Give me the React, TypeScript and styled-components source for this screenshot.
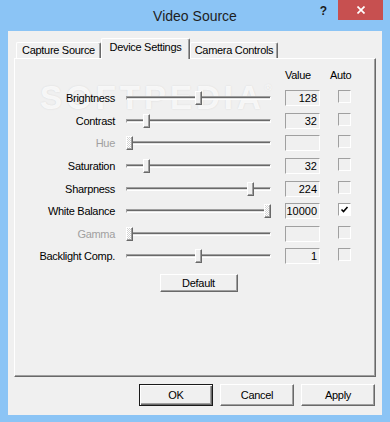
import React from "react";
import styled, { createGlobalStyle, css } from "styled-components";

const GlobalStyle = createGlobalStyle`
  html, body {
    margin: 0;
    padding: 0;
    background: #8bc4f5;
  }
  body {
    font-family: "Liberation Sans", Arial, sans-serif;
  }
`;

const Window = styled.div`
  width: 390px;
  height: 422px;
  background: #8bc4f5;
  display: flex;
  flex-direction: column;
  overflow: hidden;
`;

const TitleBar = styled.div`
  height: 31px;
  flex: none;
  display: grid;
  grid-template-columns: 1fr auto 1fr;
`;

const Title = styled.div`
  grid-column: 2;
  align-self: center;
  font-size: 14px;
  color: #1e1e1e;
`;

const Caption = styled.div`
  grid-column: 3;
  justify-self: end;
  display: flex;
  align-items: flex-start;
`;

const Help = styled.span`
  margin: 5px 11px 0 0;
  font-size: 12px;
  line-height: 12px;
  font-weight: bold;
  color: #1c1c1c;
`;

const Close = styled.div`
  width: 45px;
  height: 20px;
  margin-right: 7px;
  background: #c75050;
  display: flex;
  align-items: center;
  justify-content: center;
`;

const Client = styled.div`
  flex: 1;
  margin: 0 8px 7px;
  padding: 7px 6px 0;
  background: #f0f0f0;
  display: flex;
  flex-direction: column;
  font-size: 11px;
  letter-spacing: -0.3px;
  color: #000;
`;

const Tabs = styled.div`
  height: 20px;
  flex: none;
  display: flex;
  align-items: flex-end;
  padding-left: 2px;
  position: relative;
  z-index: 1;
`;

const raised = css`
  border-top: 1px solid #fff;
  border-left: 1px solid #fff;
  border-right: 1px solid #696969;
  box-shadow: inset -1px 0 0 #a0a0a0;
`;

const Tab = styled.div<{ $active?: boolean; $w: number }>`
  ${raised};
  box-sizing: border-box;
  width: ${(p) => p.$w}px;
  height: ${(p) => (p.$active ? 21 : 16)}px;
  margin-bottom: ${(p) => (p.$active ? -1 : 0)}px;
  border-radius: 2px 2px 0 0;
  background: #f0f0f0;
  display: flex;
  justify-content: center;
  align-items: ${(p) => (p.$active ? "flex-start" : "center")};
  padding-top: ${(p) => (p.$active ? 2 : 0)}px;
  line-height: 13px;
  white-space: nowrap;
`;

const Panel = styled.div`
  position: relative;
  height: 319px;
  flex: none;
  box-sizing: border-box;
  border-top: 1px solid #fff;
  border-left: 1px solid #fff;
  border-right: 1px solid #696969;
  border-bottom: 1px solid #696969;
  box-shadow: inset -1px -1px 0 #a0a0a0;
  padding-top: 7px;
`;

const Watermark = styled.div`
  position: absolute;
  left: 25px;
  top: 20px;
  font-size: 33px;
  font-weight: bold;
  letter-spacing: 4px;
  color: rgba(255, 255, 255, 0.8);
  text-shadow: 0 0 2px rgba(0, 0, 0, 0.1);
  pointer-events: none;

  sup {
    font-size: 9px;
    letter-spacing: 0;
    vertical-align: 18px;
  }
`;

const Settings = styled.div`
  position: relative;
  display: grid;
  grid-template-columns: 111px 159px 53px 13px;
  grid-template-rows: 21px repeat(8, 22.6px) auto;
`;

const Head = styled.div<{ $shift?: number }>`
  align-self: start;
  line-height: 18px;
  margin-left: ${(p) => p.$shift ?? 0}px;
  white-space: nowrap;
`;

const Label = styled.div<{ $disabled?: boolean }>`
  align-self: center;
  text-align: right;
  padding-right: 11px;
  white-space: nowrap;
  color: ${(p) => (p.$disabled ? "#a0a0a0" : "#000")};
`;

const Slider = styled.div`
  position: relative;
  width: 145px;
  display: flex;
  align-items: center;
`;

const Track = styled.div`
  width: 100%;
  height: 4px;
  box-sizing: border-box;
  border-top: 1px solid #a0a0a0;
  border-left: 1px solid #a0a0a0;
  border-bottom: 1px solid #fff;
  border-right: 1px solid #fff;
  background: linear-gradient(#696969 0 1px, #e3e3e3 1px);
`;

const Thumb = styled.div<{ $hatched?: boolean }>`
  position: absolute;
  top: 50%;
  margin-top: -7px;
  width: 7px;
  height: 14px;
  box-sizing: border-box;
  border-top: 1px solid #fff;
  border-left: 1px solid #fff;
  border-right: 1px solid #696969;
  border-bottom: 1px solid #696969;
  box-shadow: inset -1px -1px 0 #a0a0a0;
  background: ${(p) =>
    p.$hatched
      ? "repeating-conic-gradient(#ffffff 0 25%, #d4d4d4 0 50%) 0 0 / 2px 2px"
      : "#f0f0f0"};
`;

const sunken = css`
  box-sizing: border-box;
  border: 1px solid;
  border-color: #a0a0a0 #fff #fff #a0a0a0;
`;

const ValueBox = styled.div`
  ${sunken};
  align-self: center;
  width: 35px;
  height: 16px;
  padding-right: 2px;
  background: #f0f0f0;
  text-align: right;
  line-height: 14px;
  letter-spacing: 0;
`;

const Check = styled.div<{ $checked?: boolean }>`
  ${sunken};
  align-self: center;
  margin-top: -3px;
  width: 13px;
  height: 13px;
  background: ${(p) => (p.$checked ? "#fff" : "#f0f0f0")};
  display: flex;
  align-items: center;
  justify-content: center;
`;

const DefaultRow = styled.div`
  grid-column: 2;
  width: 145px;
  margin-top: 6px;
  display: flex;
  justify-content: center;
`;

const Button = styled.button<{ $w: number; $h: number; $primary?: boolean }>`
  width: ${(p) => p.$w}px;
  height: ${(p) => p.$h}px;
  box-sizing: border-box;
  padding: 0;
  background: #f0f0f0;
  font-family: "Liberation Sans", Arial, sans-serif;
  font-size: 11px;
  letter-spacing: -0.3px;
  color: #000;
  border: 1px solid;
  ${(p) =>
    p.$primary
      ? css`
          border-color: #1a1a1a;
          box-shadow: inset 1px 1px 0 #fff, inset -1px -1px 0 #696969,
            inset -2px -2px 0 #a0a0a0;
        `
      : css`
          border-color: #fff #696969 #696969 #fff;
          box-shadow: inset -1px -1px 0 #a0a0a0;
        `}
`;

const Footer = styled.div`
  display: flex;
  justify-content: flex-end;
  gap: 7px;
  margin-top: 7px;
  padding-right: 1px;
`;

type Row = {
  label: string;
  pos: number;
  value: string;
  disabled?: boolean;
  hatched?: boolean;
  checked?: boolean;
};

const rows: Row[] = [
  { label: "Brightness", pos: 128 / 255, value: "128" },
  { label: "Contrast", pos: 32 / 255, value: "32" },
  { label: "Hue", pos: 0, value: "", disabled: true, hatched: true },
  { label: "Saturation", pos: 32 / 255, value: "32" },
  { label: "Sharpness", pos: 224 / 255, value: "224" },
  { label: "White Balance", pos: 1, value: "10000", hatched: true, checked: true },
  { label: "Gamma", pos: 0, value: "", disabled: true, hatched: true },
  { label: "Backlight Comp.", pos: 0.5, value: "1" },
];

const THUMB_RANGE = 138;

const App = (): JSX.Element => {
  return (
    <>
      <GlobalStyle />
      <Window>
        <TitleBar>
          <Title>Video Source</Title>
          <Caption>
            <Help>?</Help>
            <Close>
              <svg width="8" height="8" viewBox="0 0 8 8">
                <path d="M0.5 0.5L7.5 7.5M7.5 0.5L0.5 7.5" stroke="#fff" strokeWidth="1.7" />
              </svg>
            </Close>
          </Caption>
        </TitleBar>

        <Client>
          <Tabs>
            <Tab $w={85}>Capture Source</Tab>
            <Tab $w={89} $active>
              Device Settings
            </Tab>
            <Tab $w={88}>Camera Controls</Tab>
          </Tabs>

          <Panel>
            <Watermark aria-hidden="true">
              SOFTPEDIA<sup>®</sup>
            </Watermark>
            <Settings>
              <span />
              <span />
              <Head>Value</Head>
              <Head $shift={-8}>Auto</Head>

              {rows.map((r) => (
                <React.Fragment key={r.label}>
                  <Label $disabled={r.disabled}>{r.label}</Label>
                  <Slider>
                    <Track />
                    <Thumb $hatched={r.hatched} style={{ left: Math.round(r.pos * THUMB_RANGE) }} />
                  </Slider>
                  <ValueBox>{r.value}</ValueBox>
                  <Check $checked={r.checked}>
                    {r.checked && (
                      <svg width="9" height="9" viewBox="0 0 9 9">
                        <path d="M1.5 4.5L3.5 6.5L7.5 2" fill="none" stroke="#000" strokeWidth="1.6" />
                      </svg>
                    )}
                  </Check>
                </React.Fragment>
              ))}

              <DefaultRow>
                <Button $w={78} $h={18}>
                  Default
                </Button>
              </DefaultRow>
            </Settings>
          </Panel>

          <Footer>
            <Button $w={74} $h={22} $primary>
              OK
            </Button>
            <Button $w={74} $h={22}>
              Cancel
            </Button>
            <Button $w={74} $h={22}>
              Apply
            </Button>
          </Footer>
        </Client>
      </Window>
    </>
  );
};

export default App;
